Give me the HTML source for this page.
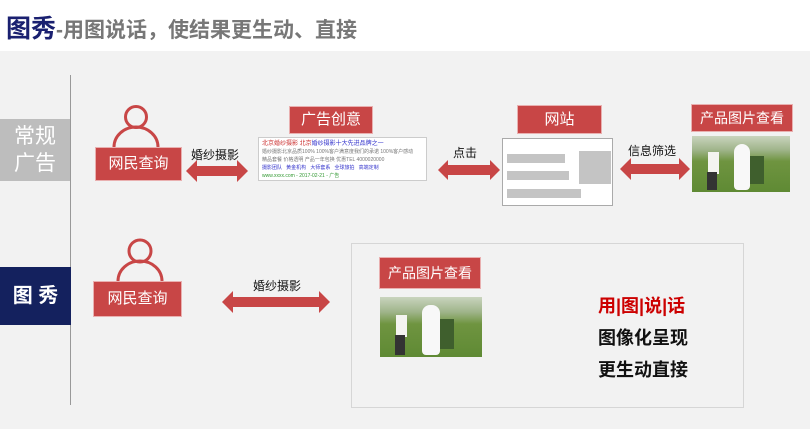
<!DOCTYPE html>
<html><head><meta charset="utf-8"><style>
body{margin:0;width:810px;height:429px;background:#f2f2f2;position:relative;overflow:hidden;font-family:"Liberation Sans","Noto Sans CJK SC",sans-serif}
.a{position:absolute}
.lab{position:absolute;background:#c84646;color:#fff;text-align:center;font-size:15px;box-shadow:0 0 0 1px #e9b0b0}
.t{position:absolute;font-size:12px;color:#111;white-space:nowrap}
.photo{position:absolute;background:linear-gradient(#c9d4be 0%,#9fb48a 25%,#6f9440 45%,#5f8a34 100%);overflow:hidden}
.ad div{white-space:nowrap}
</style></head><body>
<div class="a" style="left:0;top:0;width:810px;height:51px;background:#fff"></div>
<div class="a" style="left:6px;top:9px;font-size:25px;font-weight:bold;color:#1a2070;white-space:nowrap">图秀<span style="color:#777;font-size:21px">-用图说话，使结果更生动、直接</span></div>
<div class="a" style="left:70px;top:75px;width:1px;height:330px;background:#999"></div>
<div class="a" style="left:0;top:119px;width:70px;height:62px;background:#bdbdbd;color:#fff;font-size:21px;line-height:27px;text-align:center;padding-top:4px;box-sizing:border-box">常规<br>广告</div>
<div class="a" style="left:0;top:267px;width:71px;height:58px;background:#14215e;color:#fff;font-size:20px;font-weight:bold;line-height:58px;text-align:center">图 秀</div>

<svg class="a" style="left:108px;top:103px" width="56" height="46"><circle cx="28" cy="14" r="10.5" fill="none" stroke="#c84646" stroke-width="3"/><path d="M6 44 A22 20 0 0 1 50 44" fill="none" stroke="#c84646" stroke-width="3"/></svg>
<div class="lab" style="left:96px;top:148px;width:85px;height:32px;line-height:32px">网民查询</div>
<div class="t" style="left:191px;top:146px">婚纱摄影</div>
<svg class="a" style="left:186px;top:160px" width="62" height="22"><polygon points="0,11 11,0 11,6 51,6 51,0 62,11 51,22 51,16 11,16 11,22" fill="#c84646"/></svg>

<div class="lab" style="left:290px;top:107px;width:82px;height:26px;line-height:26px">广告创意</div>
<div class="a ad" style="left:258px;top:137px;width:169px;height:44px;background:#fff;border:1px solid #ccc;font-size:5px;line-height:8px;padding:2px 3px;box-sizing:border-box;color:#777;overflow:hidden">
<div style="color:#c33;font-size:6px">北京婚纱摄影 北京<span style="color:#33c">婚纱摄影十大先进品牌之一</span></div>
<div>婚纱摄影北京品质100% 100%客户满意度我们的承诺 100%客户感动</div>
<div>精品套餐 价格透明 产品一年包换 优惠TEL 4000020000</div>
<div style="color:#33c">摄影团队 &nbsp; 黄金机构 &nbsp; 大师套系 &nbsp; 全球旅拍 &nbsp; 高端定制</div>
<div style="color:#393">www.xxxx.com - 2017-02-21 - 广告</div></div>

<div class="t" style="left:453px;top:144px">点击</div>
<svg class="a" style="left:438px;top:160px" width="62" height="20"><polygon points="0,10 10,0 10,5 52,5 52,0 62,10 52,20 52,15 10,15 10,20" fill="#c84646"/></svg>

<div class="lab" style="left:518px;top:106px;width:83px;height:27px;line-height:27px">网站</div>
<div class="a" style="left:502px;top:138px;width:111px;height:68px;background:#fff;border:1px solid #aaa;box-sizing:border-box"></div>
<div class="a" style="left:507px;top:154px;width:58px;height:9px;background:#c4c4c4"></div>
<div class="a" style="left:507px;top:171px;width:62px;height:9px;background:#c4c4c4"></div>
<div class="a" style="left:507px;top:189px;width:74px;height:9px;background:#c4c4c4"></div>
<div class="a" style="left:579px;top:151px;width:32px;height:33px;background:#c4c4c4"></div>

<div class="t" style="left:628px;top:142px">信息筛选</div>
<svg class="a" style="left:620px;top:158px" width="70" height="22"><polygon points="0,11 11,0 11,6 59,6 59,0 70,11 59,22 59,16 11,16 11,22" fill="#c84646"/></svg>

<div class="lab" style="left:692px;top:105px;width:100px;height:26px;line-height:26px;font-size:14px">产品图片查看</div>
<div class="photo" style="left:692px;top:136px;width:98px;height:56px">
<div class="a" style="left:16px;top:16px;width:11px;height:22px;background:#f4f4f0"></div>
<div class="a" style="left:15px;top:36px;width:10px;height:18px;background:#333"></div>
<div class="a" style="left:42px;top:8px;width:16px;height:46px;background:#f8f8f8;border-radius:8px 8px 4px 4px"></div>
<div class="a" style="left:58px;top:20px;width:14px;height:28px;background:#3f5f2d"></div>
</div>

<svg class="a" style="left:112px;top:236px" width="56" height="46"><circle cx="28" cy="15" r="11" fill="none" stroke="#c84646" stroke-width="3"/><path d="M6 45 A22 20 0 0 1 50 45" fill="none" stroke="#c84646" stroke-width="3"/></svg>
<div class="lab" style="left:94px;top:282px;width:87px;height:34px;line-height:34px">网民查询</div>
<div class="t" style="left:253px;top:277px">婚纱摄影</div>
<svg class="a" style="left:222px;top:291px" width="108" height="22"><polygon points="0,11 11,0 11,6 97,6 97,0 108,11 97,22 97,16 11,16 11,22" fill="#c84646"/></svg>

<div class="a" style="left:351px;top:243px;width:393px;height:165px;border:1px solid #d6d6d6;box-sizing:border-box"></div>
<div class="lab" style="left:380px;top:258px;width:100px;height:30px;line-height:30px;font-size:14px">产品图片查看</div>
<div class="photo" style="left:380px;top:297px;width:102px;height:60px">
<div class="a" style="left:16px;top:18px;width:11px;height:22px;background:#f4f4f0"></div>
<div class="a" style="left:15px;top:38px;width:10px;height:20px;background:#333"></div>
<div class="a" style="left:42px;top:8px;width:18px;height:50px;background:#f8f8f8;border-radius:8px 8px 4px 4px"></div>
<div class="a" style="left:60px;top:22px;width:14px;height:30px;background:#3f5f2d"></div>
</div>
<div class="a" style="left:598px;top:290px;font-size:18px;font-weight:bold;line-height:32px;color:#111"><span style="color:#c00">用|图|说|话</span><br>图像化呈现<br>更生动直接</div>
</body></html>
